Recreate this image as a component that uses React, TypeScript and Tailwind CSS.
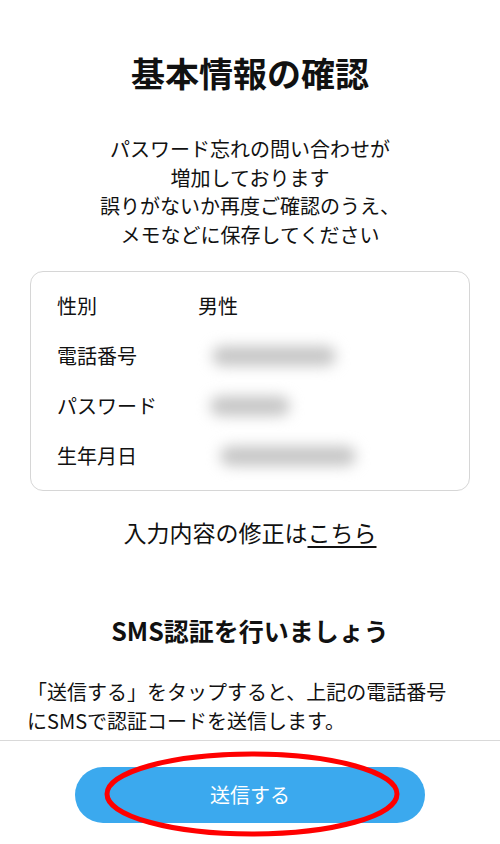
export default function App() {
  const rows: { label: string; value?: string; blur?: { w: number; ml: number } }[] = [
    { label: "性別", value: "男性" },
    { label: "電話番号", blur: { w: 124, ml: 14 } },
    { label: "パスワード", blur: { w: 80, ml: 12 } },
    { label: "生年月日", blur: { w: 136, ml: 22 } },
  ];

  return (
    <div
      className="min-h-[844px] w-[500px] bg-white text-[#111]"
      style={{ fontFamily: '"Noto Sans CJK JP", "Noto Sans", sans-serif' }}
    >
      <div className="flex flex-col items-center pt-[52px]">
        <h1 className="text-[34px] font-bold leading-[41px]">基本情報の確認</h1>

        <p className="mt-[42px] text-center text-[20px] leading-[28.5px]">
          パスワード忘れの問い合わせが
          <br />
          増加しております
          <br />
          誤りがないか再度ご確認のうえ、
          <br />
          メモなどに保存してください
        </p>

        <div className="mt-[22px] w-[440px] rounded-[13px] border border-[#d6d6d6] px-[26px] py-[9px]">
          {rows.map((r) => (
            <div key={r.label} className="flex h-[50px] items-center text-[20px]">
              <span className="w-[141px] shrink-0">{r.label}</span>
              {r.value ? (
                <span>{r.value}</span>
              ) : (
                <div
                  className="h-[20px] rounded-full bg-[#c6c6c6] blur-[7px]"
                  style={{ width: r.blur!.w, marginLeft: r.blur!.ml }}
                />
              )}
            </div>
          ))}
        </div>

        <p className="mt-[26px] text-[23px] leading-[30px]">
          入力内容の修正は<span className="underline underline-offset-[4px]">こちら</span>
        </p>

        <h2 className="mt-[67px] text-[25px] font-bold leading-[32px]">SMS認証を行いましょう</h2>
      </div>

      <p className="mt-[32px] px-[27px] text-[20px] leading-[28.5px]">
        「送信する」をタップすると、上記の電話番号
        <br />
        にSMSで認証コードを送信します。
      </p>

      <div className="mt-[5px] border-t border-[#d9d9d9]">
        <div className="relative flex justify-center pt-[26px] pb-[21px]">
          <button
            type="button"
            className="h-[56px] w-[350px] rounded-full bg-[#3ba9ee] text-[20px] text-white"
          >
            送信する
          </button>
          <svg
            className="pointer-events-none absolute left-[103px] top-[9px]"
            width="300"
            height="88"
            viewBox="0 0 300 88"
            fill="none"
            aria-hidden="true"
          >
            <ellipse cx="149" cy="44" rx="145" ry="40" stroke="#ff0000" strokeWidth="5" />
          </svg>
        </div>
      </div>
    </div>
  );
}
